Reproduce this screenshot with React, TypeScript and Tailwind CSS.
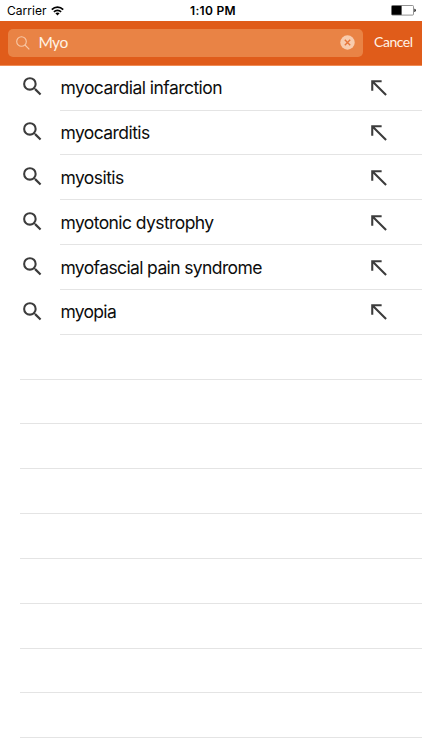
const results = [
  { text: "myocardial infarction", tracking: "tracking-[-0.54px]" },
  { text: "myocarditis", tracking: "tracking-[-0.57px]" },
  { text: "myositis", tracking: "tracking-[-0.56px]" },
  { text: "myotonic dystrophy", tracking: "tracking-[-0.58px]" },
  { text: "myofascial pain syndrome", tracking: "tracking-[-0.62px]" },
  { text: "myopia", tracking: "tracking-[-0.7px]" },
];

function StatusBar() {
  return (
    <div className="grid h-[21px] shrink-0 grid-cols-3 items-center bg-white pl-[7px] pr-[6px] text-black">
      <div className="flex items-center gap-[4px] pt-px text-[12px] leading-[16px]">
        <span className="w-[40px] tracking-[0.05px]">Carrier</span>
        <svg className="mb-px h-[10px] w-[13px]" viewBox="0 0 13 10">
          <g fill="none" stroke="#000" strokeWidth="1.7">
            <path d="M0.8 3.7C4 0.3 9 0.3 12.2 3.7" />
            <path d="M2.9 5.9C5 3.8 8 3.8 10.1 5.9" />
          </g>
          <path d="M4.4 7.3C5.6 6.2 7.4 6.2 8.6 7.3L6.5 9.5Z" fill="#000" />
        </svg>
      </div>
      <div className="pl-[3px] pt-px text-center text-[12px] font-semibold leading-[16px] tracking-[0.3px]">1:10 PM</div>
      <svg className="h-[11px] w-[25px] justify-self-end" viewBox="0 0 25 11">
        <rect x="0.5" y="0.5" width="22" height="9.6" rx="1" fill="#fff" stroke="#777" strokeWidth="0.8" />
        <rect x="0.8" y="0.8" width="9.8" height="9" fill="#000" />
        <path d="M23.3 3.7h0.5q1 0.2 1 1.6t-1 1.6h-0.5z" fill="#222" />
      </svg>
    </div>
  );
}

function SearchHeader() {
  return (
    <div className="flex h-[44.8px] shrink-0 items-center border-b border-[#f08c55] bg-[#e05c1a] pl-[8.4px] font-[Lato,sans-serif]">
      <div className="flex h-[28px] w-[354.6px] items-center rounded-[5px] bg-[#e98345] pl-[8px] pr-[8px]">
        <svg className="h-[14px] w-[14px]" viewBox="0 0 14 14" fill="none" stroke="#f8c9a8" strokeWidth="1.1">
          <circle cx="5.5" cy="5.5" r="4.8" />
          <path d="M9 9L13.3 13.3" />
        </svg>
        <span className="ml-[8px] flex-1 pb-[2px] text-[15.5px] leading-[20px] tracking-[-0.5px] text-[#fff3e6]">Myo</span>
        <svg className="h-[15px] w-[15px]" viewBox="0 0 15 15">
          <circle cx="7.5" cy="7.5" r="7.2" fill="#f8ccae" />
          <path d="M4.8 4.8L10.2 10.2M10.2 4.8L4.8 10.2" stroke="#e5753a" strokeWidth="1.4" />
        </svg>
      </div>
      <span className="ml-[11px] pb-[2px] text-[14px] leading-[20px] tracking-[-0.45px] text-[#fff3e6]">Cancel</span>
    </div>
  );
}

function ResultRow({ text, tracking }: { text: string; tracking: string }) {
  return (
    <div className="flex h-[44.84px] shrink-0 pl-[20.4px]">
      <svg className="mt-[8.6px] h-[25px] w-[25px] shrink-0" viewBox="0 0 24 24" fill="#3c3c3c">
        <path d="M15.5 14h-.79l-.28-.27A6.471 6.471 0 0 0 16 9.5 6.5 6.5 0 1 0 9.5 16c1.61 0 3.09-.59 4.23-1.57l.27.28v.79l5 4.99L20.49 19l-4.99-5zm-6 0C7.01 14 5 11.99 5 9.5S7.01 5 9.5 5 14 7.01 14 9.5 11.99 14 9.5 14z" />
      </svg>
      <div className="ml-[15px] flex flex-1 items-center border-b border-[#e4e4e4] pr-[31px]">
        <span className={`flex-1 whitespace-nowrap pt-px text-[17.5px] leading-[24px] text-[#0d0d0d] ${tracking}`}>{text}</span>
        <svg className="h-[25px] w-[25px] shrink-0" viewBox="0 0 24 24" fill="#3c3c3c">
          <path d="M5 15h2V8.41L18.59 20 20 18.59 8.41 7H15V5H5v10z" />
        </svg>
      </div>
    </div>
  );
}

export default function App() {
  return (
    <div className="flex h-[750px] w-[422px] flex-col overflow-hidden bg-white font-[Inter,sans-serif]">
      <StatusBar />
      <SearchHeader />
      {results.map((r) => (
        <ResultRow key={r.text} text={r.text} tracking={r.tracking} />
      ))}
      {Array.from({ length: 9 }, (_, i) => (
        <div key={i} className="ml-[20.4px] h-[44.84px] shrink-0 border-b border-[#e4e4e4]" />
      ))}
    </div>
  );
}
